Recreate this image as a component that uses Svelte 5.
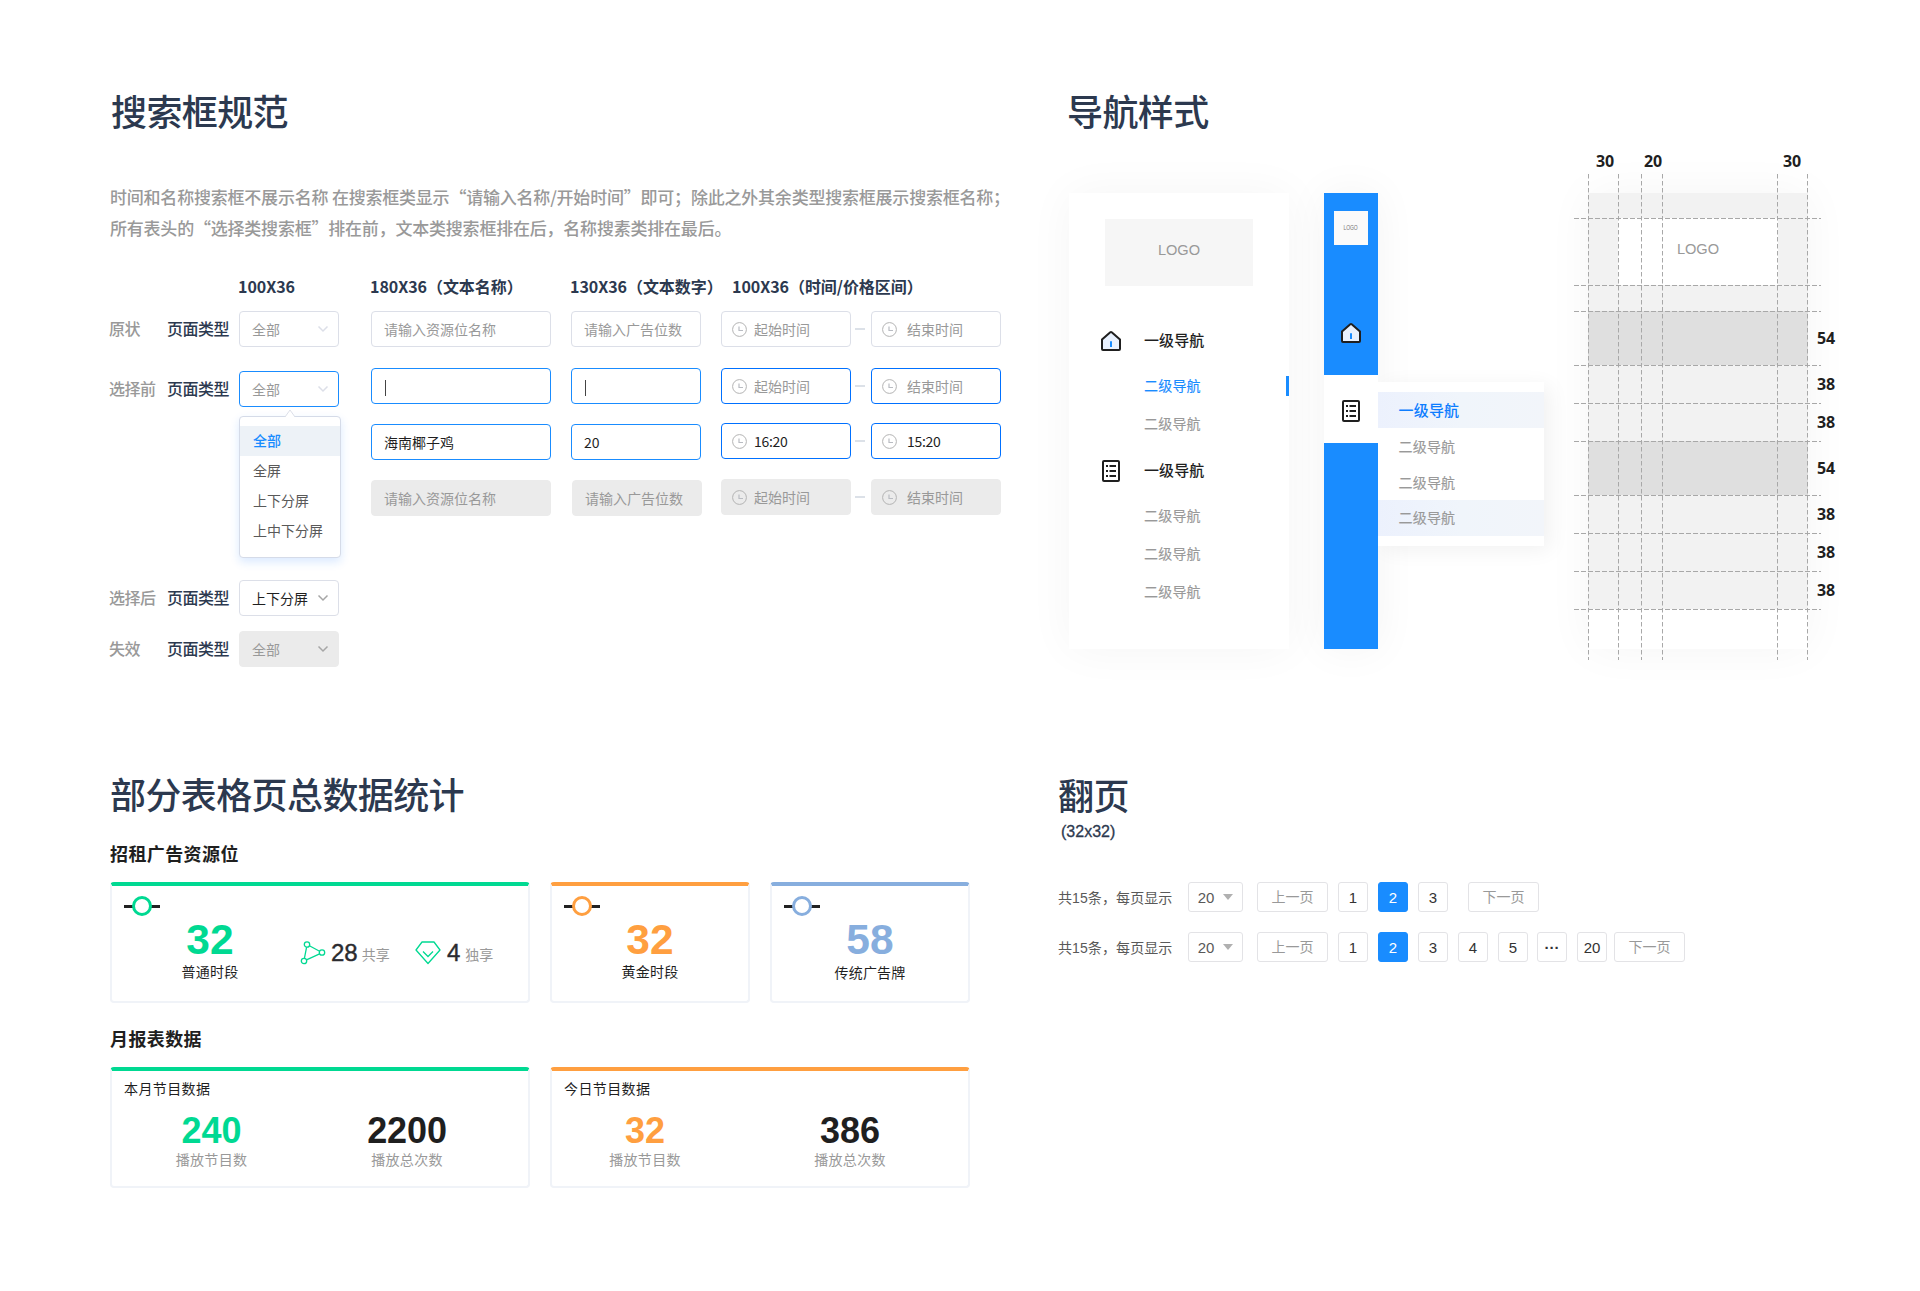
<script lang="ts">
  interface Stat {
    value: string;
    label: string;
    tone: string;
    width: number;
  }

  interface Report {
    title: string;
    tone: string;
    stats: Stat[];
  }

  const selects = [
    { state: '原状', value: '全部', kind: 'normal', offset: 0 },
    { state: '选择前', value: '全部', kind: 'active', offset: 24 },
    { state: '选择后', value: '上下分屏', kind: 'chosen', offset: 173 },
    { state: '失效', value: '全部', kind: 'disabled', offset: 15 }
  ];

  const options = ['全部', '全屏', '上下分屏', '上中下分屏'];

  const names = [
    { kind: 'normal', text: '请输入资源位名称' },
    { kind: 'active', text: '' },
    { kind: 'filled', text: '海南椰子鸡' },
    { kind: 'disabled', text: '请输入资源位名称' }
  ];

  const counts = [
    { kind: 'normal', text: '请输入广告位数' },
    { kind: 'active', text: '' },
    { kind: 'filled', text: '20' },
    { kind: 'disabled', text: '请输入广告位数' }
  ];

  const ranges = [
    { kind: 'normal', start: '起始时间', end: '结束时间' },
    { kind: 'active', start: '起始时间', end: '结束时间' },
    { kind: 'filled', start: '16:20', end: '15:20' },
    { kind: 'disabled', start: '起始时间', end: '结束时间' }
  ];

  const menu = [
    { icon: 'home', children: 2, current: 0 },
    { icon: 'list', children: 3, current: -1 }
  ];

  const bands = [54, 38, 38, 54, 38, 38, 38];
  const guideX = [14.5, 44.5, 67.5, 88.5, 203.5, 233.5];
  const guideY = [44.5, 111.5, 137.5, 191.5, 229.5, 267.5, 321.5, 359.5, 397.5, 435.5];

  const reports: Report[] = [
    {
      title: '本月节目数据',
      tone: 'green',
      stats: [
        { value: '240', label: '播放节目数', tone: 'green', width: 199 },
        { value: '2200', label: '播放总次数', tone: 'black', width: 192 }
      ]
    },
    {
      title: '今日节目数据',
      tone: 'orange',
      stats: [
        { value: '32', label: '播放节目数', tone: 'orange', width: 186 },
        { value: '386', label: '播放总次数', tone: 'black', width: 224 }
      ]
    }
  ];

  const pagers = [
    { pages: ['1', '2', '3'], next: 'far' },
    { pages: ['1', '2', '3', '4', '5', '···', '20'], next: 'near' }
  ];
</script>

{#snippet home()}
  <svg class="icon" width="20" height="20" viewBox="0 0 20 20">
    <path d="M1 8.6 L9.3 1.3 Q10 .8 10.7 1.3 L19 8.6 V18 Q19 19 18 19 H2 Q1 19 1 18 Z" fill="#e8f1fe" stroke="#1f1f1f" stroke-width="2" stroke-linejoin="round" />
    <path d="M10 10.2 V16" stroke="#198cff" stroke-width="2" />
  </svg>
{/snippet}

{#snippet list()}
  <svg class="icon" width="20" height="22" viewBox="0 0 20 22">
    <rect x="2" y="1" width="16" height="20" rx="1" fill="none" stroke="#1f1f1f" stroke-width="2" />
    <path d="M5 6H7M5 11H7M5 16H7M8.5 6H15M8.5 11H15M8.5 16H15" stroke="#1f1f1f" stroke-width="2" />
  </svg>
{/snippet}

{#snippet clock()}
  <svg class="clock" width="15" height="15" viewBox="0 0 15 15" fill="none">
    <circle cx="7.5" cy="7.5" r="6.9" stroke="#b3b3b3" />
    <path d="M7 4.5V8.5H11" stroke="#b9bcc2" stroke-width="1.2" />
  </svg>
{/snippet}

{#snippet marker()}
  <svg class="marker" width="36" height="20" viewBox="0 0 36 20">
    <path d="M0 10.5H36" stroke="#222" stroke-width="3" />
    <circle cx="18" cy="10" r="8.5" fill="#fff" stroke="currentColor" stroke-width="3" />
  </svg>
{/snippet}

<main class="page">
  <section class="search">
    <h2>搜索框规范</h2>
    <p class="note">
      时间和名称搜索框不展示名称 在搜索框类显示“请输入名称/开始时间”即可；除此之外其余类型搜索框展示搜索框名称；<br />所有表头的“选择类搜索框”排在前，文本类搜索框排在后，名称搜素类排在最后。
    </p>

    <div class="board">
      <div class="col selects">
        <h4>100X36</h4>
        {#each selects as row}
          <div class="select-row" style="margin-top: {row.offset}px">
            <span class="state">{row.state}</span>
            <span class="field">页面类型</span>
            <div class="box select {row.kind}">
              <span>{row.value}</span>
              <svg class="chevron" width="12" height="8" viewBox="0 0 12 8" fill="none">
                <path d="M1.5 1.5L6 6L10.5 1.5" stroke="currentColor" stroke-width="1.5" />
              </svg>
              {#if row.kind === 'active'}
                <div class="dropdown">
                  <svg class="notch" width="12" height="8" viewBox="0 0 12 8">
                    <path d="M1 8L6 1L11 8" fill="#fff" stroke="#dcdfe8" />
                  </svg>
                  {#each options as option, i}
                    <div class="option" class:current={i === 0}>{option}</div>
                  {/each}
                </div>
              {/if}
            </div>
          </div>
        {/each}
      </div>

      <div class="col names">
        <h4>180X36（文本名称）</h4>
        {#each names as item}
          <div class="box {item.kind}">
            {#if item.text}{item.text}{:else}<i class="caret"></i>{/if}
          </div>
        {/each}
      </div>

      <div class="col counts">
        <h4>130X36（文本数字）</h4>
        {#each counts as item}
          <div class="box {item.kind}">
            {#if item.text}{item.text}{:else}<i class="caret"></i>{/if}
          </div>
        {/each}
      </div>

      <div class="col ranges">
        <h4>100X36（时间/价格区间）</h4>
        {#each ranges as range}
          <div class="range">
            <div class="box time {range.kind}">{@render clock()}{range.start}</div>
            <i class="dash"></i>
            <div class="box time end {range.kind}">{@render clock()}{range.end}</div>
          </div>
        {/each}
      </div>
    </div>
  </section>

  <section class="nav">
    <h2>导航样式</h2>
    <div class="nav-row">
      <nav class="sidebar">
        <div class="logo">LOGO</div>
        {#each menu as group}
          <div class="level1">
            {#if group.icon === 'home'}{@render home()}{:else}{@render list()}{/if}
            <span>一级导航</span>
          </div>
          {#each Array(group.children) as _, i}
            <div class="level2" class:current={i === group.current}>二级导航</div>
          {/each}
        {/each}
      </nav>

      <div class="rail">
        <div class="rail-logo"><span>LOGO</span></div>
        <div class="rail-item">{@render home()}</div>
        <div class="rail-item open">
          {@render list()}
          <div class="flyout">
            <div class="fly head">一级导航</div>
            <div class="fly">二级导航</div>
            <div class="fly">二级导航</div>
            <div class="fly hover">二级导航</div>
          </div>
        </div>
      </div>

      <div class="spec">
        <div class="spec-body">
          <div class="spec-logo">LOGO</div>
          {#each bands as band}
            <div class="band" class:dark={band === 54} style="height: {band}px">
              <b>{band}</b>
            </div>
          {/each}
        </div>
        <svg class="guides" width="248" height="487" viewBox="0 0 248 487">
          {#each guideX as x}
            <path d="M{x} 0V486" stroke-dasharray="4.5 2.5" />
          {/each}
          {#each guideY as y}
            <path d="M0 {y}H247" stroke-dasharray="5 2" />
          {/each}
        </svg>
        <div class="spec-top"><b>30</b><b>20</b><b>30</b></div>
      </div>
    </div>
  </section>

  <section class="totals">
    <h2>部分表格页总数据统计</h2>
    <h3>招租广告资源位</h3>
    <div class="cards">
      <div class="card wide green">
        {@render marker()}
        <div class="wide-body">
          <div class="figure">
            <strong>32</strong>
            <span>普通时段</span>
          </div>
          <div class="share">
            <svg width="26" height="26" viewBox="0 0 26 26" fill="none" stroke="currentColor" stroke-width="1.3">
              <circle cx="7" cy="4.5" r="2.7" />
              <circle cx="22" cy="12.5" r="2.7" />
              <circle cx="4" cy="21" r="2.7" />
              <path d="M6.6 7.2L4.4 18.3M9.4 5.8L19.6 11.3M6.5 19.8L19.6 13.8" />
            </svg>
            <em>28</em><small>共享</small>
          </div>
          <div class="sole">
            <svg width="26" height="26" viewBox="0 0 26 26" fill="none" stroke="currentColor" stroke-width="1.3">
              <path d="M7 2H19L25 10L13 23.5L1 10Z" stroke-linejoin="round" />
              <path d="M8 11.5L13 16.5L18 11.5" />
            </svg>
            <em>4</em><small>独享</small>
          </div>
        </div>
      </div>
      <div class="card narrow orange">
        {@render marker()}
        <div class="figure">
          <strong>32</strong>
          <span>黄金时段</span>
        </div>
      </div>
      <div class="card narrow steel">
        {@render marker()}
        <div class="figure">
          <strong>58</strong>
          <span>传统广告牌</span>
        </div>
      </div>
    </div>

    <h3 class="monthly">月报表数据</h3>
    <div class="cards">
      {#each reports as report}
        <div class="card wide report {report.tone}">
          <div class="report-title">{report.title}</div>
          <div class="report-stats">
            {#each report.stats as stat}
              <div class="stat" style="width: {stat.width}px">
                <strong class={stat.tone}>{stat.value}</strong>
                <span>{stat.label}</span>
              </div>
            {/each}
          </div>
        </div>
      {/each}
    </div>
  </section>

  <section class="paging">
    <h2>翻页</h2>
    <div class="size">(32x32)</div>
    {#each pagers as pager}
      <div class="pager">
        <span class="total">共15条，每页显示</span>
        <div class="btn per-page">20<i class="arrow"></i></div>
        <div class="btn step">上一页</div>
        {#each pager.pages as page}
          <div class="btn num" class:on={page === '2'} class:more={page === '···'}>{page}</div>
        {/each}
        <div class="btn step {pager.next}">下一页</div>
      </div>
    {/each}
  </section>
</main>

<style>
  :global(body) {
    background: #fff;
  }
  .page {
    display: grid;
    grid-template-columns: 1040px 880px;
    grid-template-rows: 745px 546px;
    width: 1920px;
    height: 1291px;
    overflow: hidden;
    font-family: 'Noto Sans CJK SC', 'Liberation Sans', sans-serif;
    color: #1f1f1f;
  }
  .page * {
    box-sizing: border-box;
  }
  h2,
  h3,
  h4,
  p {
    margin: 0;
    white-space: nowrap;
  }
  h2 {
    height: 52px;
    line-height: 48px;
    font-size: 36px;
    font-weight: 500;
    letter-spacing: -0.6px;
    color: #2c394f;
  }
  i {
    font-style: normal;
  }

  /* search boxes */
  .search {
    padding: 86px 0 0 110px;
  }
  .search h2 {
    padding-left: 1px;
  }
  .note {
    margin-top: 43px;
    height: 63px;
    font-size: 17px;
    font-weight: 500;
    line-height: 31.3px;
    letter-spacing: -0.21px;
    color: #999;
  }
  .board {
    display: flex;
    gap: 20px;
    margin: 32px 0 0 -1px;
  }
  .col {
    display: flex;
    flex-direction: column;
  }
  h4 {
    height: 20px;
    margin: 0 0 15px -1px;
    line-height: 20px;
    font-size: 16px;
    font-weight: 700;
    letter-spacing: -0.05px;
    color: #2c394f;
  }
  .selects {
    width: 242px;
  }
  .selects h4 {
    padding-left: 130px;
  }
  .select-row {
    display: flex;
    align-items: center;
    height: 36px;
  }
  .state,
  .field {
    padding-bottom: 2px;
    font-size: 16px;
    font-weight: 500;
    letter-spacing: -0.5px;
    line-height: 24px;
    white-space: nowrap;
  }
  .state {
    width: 58px;
    color: #999;
  }
  .field {
    width: 72px;
    color: #2c394f;
  }
  .box {
    display: flex;
    align-items: center;
    height: 36px;
    padding-left: 12px;
    border: 1px solid #dcdfe8;
    border-radius: 4px;
    background: #fff;
    font-size: 14px;
    color: #999;
    white-space: nowrap;
  }
  .box.active,
  .box.filled {
    border-color: #198cff;
  }
  .box.filled,
  .box.chosen {
    color: #1f1f1f;
  }
  .box.disabled {
    border-color: #ebebeb;
    background: #ebebeb;
  }
  .select {
    position: relative;
    justify-content: space-between;
    width: 100px;
    padding: 0 9px 0 12px;
  }
  .chevron {
    color: #dcdfe8;
  }
  .chosen .chevron,
  .disabled .chevron {
    color: #a6a6a6;
  }
  .dropdown {
    position: absolute;
    z-index: 2;
    left: -1px;
    top: 44px;
    width: 102px;
    height: 142px;
    padding-top: 9px;
    border: 1px solid #d5dbe8;
    border-radius: 4px;
    background: #fff;
    box-shadow: 0 4px 10px rgba(25, 120, 255, 0.16);
  }
  .notch {
    position: absolute;
    left: 44px;
    top: -8px;
  }
  .option {
    height: 30px;
    padding-left: 13px;
    line-height: 28px;
    color: #595959;
  }
  .option.current {
    background: #edf2f7;
    color: #198cff;
    font-weight: 500;
  }
  .names {
    width: 180px;
  }
  .counts {
    width: 130px;
  }
  .names .box + .box,
  .counts .box + .box {
    margin-top: 20px;
  }
  .names .box:nth-child(3),
  .counts .box:nth-child(3) {
    margin-top: 21px;
  }
  .counts .disabled {
    margin-left: 1px;
    width: 130px;
  }
  .caret {
    width: 1px;
    height: 16px;
    margin: 3px 0 0 1px;
    background: #444;
  }
  .ranges h4 {
    padding-left: 12px;
  }
  .range {
    display: flex;
    align-items: center;
  }
  .range:nth-child(3) {
    margin-top: 21px;
  }
  .range:nth-child(4) {
    margin-top: 19px;
  }
  .range:nth-child(5) {
    margin-top: 20px;
  }
  .time {
    width: 130px;
    gap: 7px;
    padding-left: 10px;
  }
  .time.end {
    gap: 10px;
  }
  .time.active,
  .time.filled {
    border-color: #0070ff;
  }
  .time.filled {
    letter-spacing: -0.3px;
  }
  .dash {
    width: 10px;
    height: 2px;
    margin: 0 6px 0 4px;
    background: #dce1e8;
  }

  /* navigation */
  .nav {
    padding: 86px 0 0 29px;
  }
  .nav h2 {
    margin-left: -2px;
  }
  .nav-row {
    display: flex;
    margin-top: 55px;
    height: 456px;
  }
  .sidebar {
    width: 220px;
    padding-top: 26px;
    background: #fff;
    box-shadow: 0 0 44px rgba(0, 0, 0, 0.045);
  }
  .icon {
    display: block;
    flex: none;
  }
  .logo {
    width: 148px;
    height: 67px;
    margin: 0 0 27px 36px;
    background: #f6f6f6;
    font: 14.6px/63px 'Liberation Sans', sans-serif;
    text-align: center;
    color: #999;
  }
  .level1 {
    display: flex;
    align-items: center;
    gap: 23px;
    height: 54px;
    padding: 1px 0 0 32px;
    font-size: 15px;
    font-weight: 500;
    letter-spacing: 0.1px;
  }
  .level1 span {
    padding-bottom: 3px;
  }
  .level2 {
    height: 38px;
    padding-left: 75px;
    font-size: 14px;
    line-height: 37px;
    color: #999;
    letter-spacing: 0.2px;
    -webkit-text-stroke: 0.15px currentColor;
  }
  .level2.current {
    color: #198cff;
    background: linear-gradient(#198cff, #198cff) right center / 3px 20px no-repeat;
  }
  .rail {
    position: relative;
    width: 54px;
    margin-left: 35px;
    padding-top: 18px;
    background: #198cff;
    box-shadow: 0 0 44px rgba(0, 0, 0, 0.05);
  }
  .rail-logo {
    width: 34px;
    height: 34px;
    margin: 0 auto 54px;
    background: #fafafa;
    font: 8px/33px 'Liberation Sans', sans-serif;
    color: #777;
    display: flex;
    justify-content: center;
  }
  .rail-logo span {
    transform: scaleX(0.62);
  }
  .rail-item {
    display: flex;
    align-items: center;
    justify-content: center;
    height: 68px;
  }
  .rail-item:nth-child(2) {
    margin-bottom: 8px;
  }
  .rail-item.open {
    position: relative;
    padding-top: 4px;
    background: #fff;
  }
  .flyout {
    position: absolute;
    left: 54px;
    top: 7px;
    width: 166px;
    height: 164px;
    padding: 10px 0;
    background: #fff;
    box-shadow: 6px 4px 20px rgba(0, 0, 0, 0.06);
    clip-path: inset(-30px -30px -30px 0);
  }
  .fly {
    height: 36px;
    padding-left: 20.5px;
    font-size: 14px;
    line-height: 36px;
    color: #999;
    letter-spacing: 0.2px;
    -webkit-text-stroke: 0.15px currentColor;
  }
  .fly.head,
  .fly.hover {
    background: linear-gradient(90deg, #ecf1fd, #f0f5fb 50%, #f2f5fa);
  }
  .fly.hover {
    line-height: 34px;
  }
  .fly.head {
    font-size: 15px;
    font-weight: 500;
    color: #0d7dff;
    -webkit-text-stroke: 0;
  }
  .spec {
    position: relative;
    width: 220px;
    margin-left: 210px;
  }
  .spec-body {
    height: 456px;
    padding-top: 25px;
    background: linear-gradient(#f2f2f2, #f2f2f2) 0 0 / 100% 118px no-repeat #fff;
    box-shadow: 0 0 44px rgba(0, 0, 0, 0.045);
  }
  .spec-logo {
    width: 160px;
    height: 67px;
    margin: 0 0 26px 30px;
    background: #fff;
    font: 14.6px/63px 'Liberation Sans', sans-serif;
    text-align: center;
    color: #999;
  }
  .band {
    position: relative;
    background: #f2f2f2;
  }
  .band.dark {
    background: #dfdfdf;
  }
  .band b,
  .spec-top b {
    font-family: 'Noto Sans', sans-serif;
    font-size: 16px;
    line-height: 20px;
    letter-spacing: -0.1px;
  }
  .band b {
    position: absolute;
    left: 229px;
    top: calc(50% - 10px);
  }
  .guides {
    position: absolute;
    left: -14px;
    top: -19px;
    fill: none;
    stroke: #a8a8a8;
  }
  .spec-top b {
    position: absolute;
    top: -42px;
    left: 8px;
  }
  .spec-top b:nth-child(2) {
    left: 56px;
  }
  .spec-top b:nth-child(3) {
    left: 195px;
  }

  /* totals */
  .totals {
    padding: 24px 0 0 110px;
  }
  h3 {
    height: 24px;
    margin: 20px 0 17px;
    line-height: 24px;
    font-size: 18px;
    font-weight: 700;
    letter-spacing: 0.4px;
  }
  .monthly {
    margin: 23px 0 17px;
  }
  .cards {
    display: flex;
    gap: 20px;
  }
  .card {
    height: 121px;
    padding: 0 12px;
    border: 2px solid #f0f3f8;
    border-top: 4px solid currentColor;
    border-radius: 4px;
  }
  .wide {
    width: 420px;
  }
  .narrow {
    width: 200px;
  }
  .green {
    color: #00d992;
  }
  .orange {
    color: #ff9f40;
  }
  .steel {
    color: #87aede;
  }
  .black {
    color: #1f1f1f;
  }
  .marker {
    display: block;
    margin-top: 10px;
  }
  .wide-body {
    display: flex;
    align-items: flex-start;
  }
  .figure {
    display: flex;
    flex-direction: column;
    align-items: center;
    width: 172px;
    padding-top: 1px;
  }
  .figure strong {
    font: bold 42.5px/46px 'Liberation Sans', sans-serif;
  }
  .figure span {
    margin-top: -2px;
    font-size: 14px;
    line-height: 20px;
    letter-spacing: 0.2px;
    color: #1f1f1f;
  }
  .steel .figure span {
    margin-top: -1px;
  }
  .share,
  .sole {
    display: flex;
    align-items: center;
    margin-top: 23px;
    white-space: nowrap;
  }
  .share {
    margin-left: 4px;
    width: 115px;
  }
  .share em,
  .sole em {
    margin: 0 4px 0 5px;
    padding-top: 1px;
    font: 24px/26px 'Liberation Sans', sans-serif;
    color: #2b2b2f;
    -webkit-text-stroke: 0.4px #2b2b2f;
  }
  .sole em {
    margin: 0 5px 0 6px;
  }
  .share small,
  .sole small {
    padding-top: 3px;
    font-size: 14px;
    line-height: 22px;
    color: #999;
  }
  .report-title {
    margin-top: 7px;
    font-size: 14px;
    line-height: 20px;
    letter-spacing: 0.4px;
    color: #1f1f1f;
  }
  .report-stats {
    display: flex;
    margin-left: -12px;
    padding-top: 13px;
  }
  .stat {
    display: flex;
    flex: none;
    flex-direction: column;
    align-items: center;
  }
  .stat strong {
    font: bold 36px/40px 'Liberation Sans', sans-serif;
    letter-spacing: -0.1px;
  }
  .stat span {
    margin-top: -2px;
    font-size: 14px;
    line-height: 20px;
    letter-spacing: 0.3px;
    color: #999;
  }

  /* paging */
  .paging {
    padding: 25px 0 0 18px;
  }
  .size {
    height: 20px;
    margin: 0 0 40px 3px;
    font: 16px/20px 'Liberation Sans', sans-serif;
    color: #2c394f;
    -webkit-text-stroke: 0.3px #2c394f;
  }
  .pager {
    display: flex;
    align-items: center;
    height: 30px;
    margin-bottom: 20px;
    font-size: 14px;
    font-family: 'Liberation Sans', 'Noto Sans CJK SC', sans-serif;
    color: #595959;
  }
  .total {
    width: 130px;
    letter-spacing: 0.1px;
    white-space: nowrap;
  }
  .btn {
    display: flex;
    align-items: center;
    justify-content: center;
    height: 30px;
    border: 1px solid #e3e3e6;
    border-radius: 3px;
  }
  .per-page {
    width: 55px;
    gap: 9px;
    margin-right: 14px;
    padding-top: 1px;
    font-size: 15px;
  }
  .arrow {
    margin-top: -2px;
    border: 5px solid transparent;
    border-top: 6px solid #b0b0b0;
    border-bottom: 0;
  }
  .step {
    width: 71px;
    padding-bottom: 2px;
    color: #999;
  }
  .num {
    width: 30px;
    margin-left: 10px;
    padding-top: 1px;
    font-size: 15px;
    color: #333;
  }
  .more {
    margin-left: 9px;
    font-weight: 700;
  }
  .on {
    border-color: #198cff;
    background: #198cff;
    color: #fff;
  }
  .far {
    margin-left: 20px;
  }
  .near {
    margin-left: 7px;
  }
</style>
